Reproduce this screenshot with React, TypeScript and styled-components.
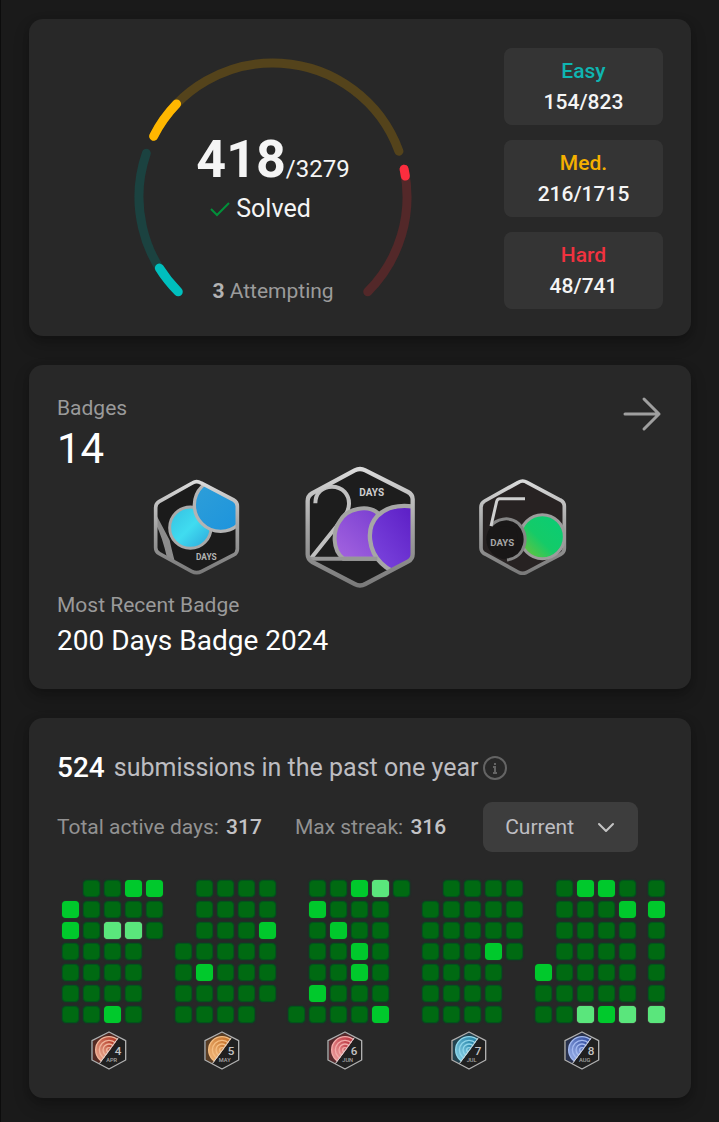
import React from 'react';
import styled, { createGlobalStyle } from 'styled-components';

const GlobalStyle = createGlobalStyle`
  *, *::before, *::after { box-sizing: border-box; }
  body {
    margin: 0;
    background: #1a1a1a;
    color: #f5f5f5;
    font-family: Roboto, "Liberation Sans", sans-serif;
  }
`;

const Page = styled.main`
  display: flex;
  flex-direction: column;
  gap: 29px;
  padding: 19px 28px 24px;
  border-left: 1px solid #0c0c0c;
`;

const Card = styled.section`
  border-radius: 14px;
  background: #282828;
  padding: 28px;
  box-shadow: 0 2px 6px rgba(0, 0, 0, 0.12), 0 8px 16px rgba(0, 0, 0, 0.22);
`;

/* ---------- Solved problems ---------- */

const ProgressCard = styled(Card)`
  display: flex;
  justify-content: space-between;
  gap: 28px;
  padding-top: 29px;
  padding-bottom: 27px;
`;

const Gauge = styled.div`
  flex: 1;
  display: grid;
  justify-items: center;
  align-items: start;
  padding: 9px 0 0 13px;
`;

const GaugeRing = styled.svg`
  grid-area: 1 / 1;
  width: 280px;
  height: 244px;
`;

const GaugeText = styled.div`
  grid-area: 1 / 1;
  display: flex;
  flex-direction: column;
  align-items: center;
  padding-top: 71px;
`;

const SolvedCount = styled.div`
  display: flex;
  align-items: baseline;
  font-size: 24px;
  line-height: 32px;
`;

const SolvedNumber = styled.strong`
  font-size: 52px;
  font-weight: 700;
  line-height: 64px;
`;

const SolvedLabel = styled.div`
  display: flex;
  align-items: center;
  gap: 5px;
  padding-right: 26px;
  font-size: 25px;
  line-height: 34px;
`;

const Attempting = styled.div`
  margin-top: 51px;
  color: #9b9b9b;
  font-size: 21px;
  line-height: 28px;

  strong { font-weight: 700; color: #b3b3b3; }
`;

const Levels = styled.ul`
  display: flex;
  flex-direction: column;
  gap: 15px;
  width: 159px;
  margin: 0;
  padding: 0;
  list-style: none;
`;

const Level = styled.li`
  height: 77px;
  padding-top: 8px;
  border-radius: 8px;
  background: #343434;
  text-align: center;
  font-size: 21px;
  font-weight: 500;
  line-height: 31px;
`;

const LevelName = styled.div<{ $color: string }>`
  color: ${(p) => p.$color};
`;

/* ---------- Badges ---------- */

const BadgesCard = styled(Card)`
  padding-top: 29px;
  padding-bottom: 26px;
`;

const BadgesHead = styled.div`
  display: flex;
  justify-content: space-between;
`;

const Muted = styled.div`
  color: #9a9a9a;
  font-size: 21px;
  line-height: 28px;
`;

const BadgeTotal = styled.div`
  color: #fff;
  font-size: 42px;
  line-height: 54px;
`;

const ArrowButton = styled.button`
  display: flex;
  align-self: flex-start;
  padding: 0;
  border: 0;
  background: none;
  color: #9f9f9f;
  cursor: pointer;
`;

const MedalRow = styled.div`
  display: flex;
  justify-content: center;
  align-items: center;
  gap: 64px;
  margin: -10px 0 3px;
`;

const RecentName = styled.div`
  color: #fff;
  font-size: 28px;
  line-height: 44px;
`;

/* ---------- Submissions ---------- */

const Summary = styled.div`
  display: flex;
  align-items: center;
  color: #bdbdc1;
  font-size: 25px;
  line-height: 44px;
`;

const SummaryCount = styled.span`
  margin-right: 9px;
  color: #fff;
  font-size: 28px;
  font-weight: 500;
`;

const InfoButton = styled.button`
  display: flex;
  margin-left: 5px;
  padding: 0;
  border: 0;
  background: none;
  color: #646464;
`;

const Filters = styled.div`
  display: flex;
  align-items: center;
  gap: 33px;
  margin-top: 12px;
  color: #929292;
  font-size: 21px;

  strong {
    margin-left: 2px;
    font-weight: 500;
    color: #c3c3c6;
  }
`;

const SelectBox = styled.div`
  display: grid;
  align-items: center;
  width: 155px;
  margin-left: 4px;

  svg {
    grid-area: 1 / 1;
    justify-self: end;
    margin-right: 22px;
    pointer-events: none;
  }
`;

const Select = styled.select`
  grid-area: 1 / 1;
  height: 50px;
  padding: 0 40px 0 22px;
  border: 0;
  border-radius: 9px;
  background: #3d3d3d;
  color: #bebec2;
  font: inherit;
  appearance: none;
`;

const Calendar = styled.div`
  display: flex;
  gap: 12px;
  margin: 28px -6px 0 5px;
`;

const Month = styled.div`
  display: flex;
  flex-direction: column;
  align-items: center;
  gap: 8px;
`;

const Days = styled.div`
  display: grid;
  grid-template-rows: repeat(7, 17px);
  grid-auto-flow: column;
  grid-auto-columns: 17px;
  gap: 4px;
`;

const dayStyles: Record<string, string> = {
  D: 'background: #006a12; border: 1px solid #02551b; box-shadow: 0 0 2px #004a24;',
  B: 'background: #00c92c; box-shadow: 0 0 1px #00802a;',
  L: 'background: #5ae67c; box-shadow: 0 0 1px #9fe0a4;',
  '.': '',
};

const Day = styled.span<{ $level: string }>`
  border-radius: 4px;
  ${(p) => dayStyles[p.$level]}
`;

const MonthMedal = styled.svg`
  width: 36px;
  height: 39px;
  margin-right: 8px;
`;

/* ---------- Drawings ---------- */

const CX = 140;
const CY = 140;
const R = 134;

const point = (t: number) => {
  const a = ((135 + t) * Math.PI) / 180;
  return `${(CX + R * Math.cos(a)).toFixed(2)} ${(CY + R * Math.sin(a)).toFixed(2)}`;
};

const arc = (from: number, to: number) => `M${point(from)}A${R} ${R} 0 0 1 ${point(to)}`;

const arcs = [
  { from: 0, done: 13, to: 64, track: '#1b4240', color: '#00bfbd' },
  { from: 72, done: 89, to: 205, track: '#54431b', color: '#ffb700' },
  { from: 213, done: 216, to: 270, track: '#532829', color: '#fb2d3e' },
];

const Ring = () => (
  <GaugeRing viewBox="0 0 280 244" fill="none" strokeWidth="9" strokeLinecap="round" aria-hidden="true">
    {arcs.map((a) => (
      <g key={a.color}>
        <path d={arc(a.from, a.to)} stroke={a.track} />
        <path d={arc(a.from, a.done)} stroke={a.color} />
      </g>
    ))}
  </GaugeRing>
);

const medalFont = { fontFamily: 'Roboto, sans-serif', fontWeight: 500 };
const narrowFont = { fontFamily: '"Liberation Sans Narrow", Roboto, sans-serif', fontWeight: 700 };

const HEX100 =
  'M160 68Q173 60 186 68L284 119Q295 125 295 138V266Q295 278 284 284L188 333Q173 341 158 333L61 280Q50 274 50 262V142Q50 130 60 124Z';

const Medal100 = () => (
  <svg width="88" height="96" viewBox="42 56 264 288" role="img" aria-label="100 Days Badge">
    <defs>
      <linearGradient id="steel" x1="0" y1="0" x2="0" y2="1">
        <stop offset="0" stopColor="#dadada" />
        <stop offset="0.5" stopColor="#a3a3a3" />
        <stop offset="1" stopColor="#7a7a7a" />
      </linearGradient>
      <linearGradient id="cyan" x1="0" y1="0" x2="1" y2="1">
        <stop offset="0" stopColor="#35bfe0" />
        <stop offset="0.5" stopColor="#40dcf0" />
        <stop offset="1" stopColor="#2ba3da" />
      </linearGradient>
      <linearGradient id="azure" x1="0" y1="0" x2="1" y2="1">
        <stop offset="0" stopColor="#2f9fd8" />
        <stop offset="1" stopColor="#1b93dd" />
      </linearGradient>
      <clipPath id="hex100"><path d={HEX100} /></clipPath>
    </defs>
    <path d={HEX100} fill="#1b1b1b" />
    <g clipPath="url(#hex100)">
      <path d="M50 160L92 240Q98 268 108 306L84 292Q70 230 50 190Z" fill="#8c8c8c" />
      <circle cx="154" cy="202" r="62" fill="url(#cyan)" stroke="#a9a9a9" strokeWidth="9" />
      <circle cx="245" cy="134" r="79" fill="url(#azure)" stroke="#b4b4b4" strokeWidth="10" />
    </g>
    <path d={HEX100} fill="none" stroke="url(#steel)" strokeWidth="11" />
    <text x="171" y="300" fontSize="25" fill="#b4b4b4" {...narrowFont}>DAYS</text>
  </svg>
);

const HEX200 =
  'M194 45Q210 37 226 45L354 110Q368 118 368 132V296Q368 311 355 318L226 386Q210 395 194 386L67 320Q53 312 53 297V137Q53 122 66 114Z';

const Medal200 = () => (
  <svg width="110" height="122" viewBox="45 32 330 366" role="img" aria-label="200 Days Badge">
    <defs>
      <linearGradient id="violet" x1="1" y1="0" x2="0" y2="1">
        <stop offset="0" stopColor="#7439cf" />
        <stop offset="1" stopColor="#a565e0" />
      </linearGradient>
      <linearGradient id="purple" x1="1" y1="0" x2="0" y2="1">
        <stop offset="0" stopColor="#5a1cc4" />
        <stop offset="1" stopColor="#7e48df" />
      </linearGradient>
      <clipPath id="hex200"><path d={HEX200} /></clipPath>
    </defs>
    <path d={HEX200} fill="#1d1d1d" />
    <g clipPath="url(#hex200)" fill="none">
      <path d="M76 144C76 112 98 94 126 94C158 94 178 118 177 146C176 166 168 178 150 200L62 310" stroke="#c0c0c0" strokeWidth="12" />
      <path d="M160 310C126 284 128 226 150 196C172 158 232 148 262 172L300 310Z" fill="url(#violet)" stroke="#a4a4a4" strokeWidth="12" />
      <path d="M372 154C330 148 288 156 262 182C226 220 236 286 274 324Q288 338 305 342L378 312Z" fill="url(#purple)" />
      <path d="M372 154C330 148 288 156 262 182C226 220 236 286 274 324Q288 338 305 346" stroke="#a6a6a6" strokeWidth="13" />
      <path d="M58 310H262" stroke="#979797" strokeWidth="12" />
    </g>
    <path d={HEX200} fill="none" stroke="url(#steel)" strokeWidth="13" />
    <text x="208" y="121" fontSize="30" fill="#cfcfcf" {...narrowFont}>DAYS</text>
  </svg>
);

const HEX50 =
  'M160 51Q173 43 186 51L286 104Q298 110 298 123V249Q298 261 287 267L187 320Q173 328 159 320L60 266Q48 260 48 247V126Q48 113 59 107Z';

const Medal50 = () => (
  <svg width="88" height="96" viewBox="42 41 264 288" role="img" aria-label="50 Days Badge">
    <defs>
      <linearGradient id="green" x1="0" y1="1" x2="1" y2="0">
        <stop offset="0.1" stopColor="#66c23f" />
        <stop offset="0.45" stopColor="#14cb68" />
        <stop offset="1" stopColor="#08cc76" />
      </linearGradient>
      <clipPath id="hex50"><path d={HEX50} /></clipPath>
    </defs>
    <path d={HEX50} fill="#272222" />
    <path d={HEX50} fill="none" stroke="url(#steel)" strokeWidth="11" />
    <g clipPath="url(#hex50)">
      <circle cx="124" cy="222" r="60" fill="#191717" />
    </g>
    <circle cx="232" cy="214" r="66" fill="url(#green)" stroke="#9c9c9c" strokeWidth="9" />
    <path d="M78 182C92 162 132 150 160 174C196 208 184 276 126 284C150 262 168 220 150 186Z" fill="#191717" />
    <path d="M78 182C92 162 132 150 160 174C196 208 184 276 126 284" fill="none" stroke="#858585" strokeWidth="9" />
    <path d="M180 100H104Q97 100 95 108L78 182" fill="none" stroke="#cfcfcf" strokeWidth="9" />
    <text x="76" y="243" fontSize="29" fill="#a6a6a6" {...narrowFont}>DAYS</text>
  </svg>
);

type MonthData = {
  name: string;
  label: string;
  number: number;
  tone?: [string, string];
  weeks: string[];
};

const SmallMedal = ({ m }: { m: MonthData }) => {
  const [light, dark] = m.tone!;
  const hex = 'M54 3L104 29V87L54 114L3 87V29Z';
  return (
    <MonthMedal viewBox="0 0 108 117" role="img" aria-label={`${m.name} badge`}>
      <defs>
        <clipPath id={`half-${m.label}`}><path d="M54 5L84 20L26 98L5 86V30Z" /></clipPath>
        <linearGradient id={`tone-${m.label}`} x1="1" y1="0" x2="0" y2="1">
          <stop offset="0.2" stopColor={dark} />
          <stop offset="1" stopColor={light} />
        </linearGradient>
      </defs>
      <path d={hex} fill="#202020" />
      <g clipPath={`url(#half-${m.label})`} fill={`url(#tone-${m.label})`} stroke={light} strokeWidth="4">
        <rect width="108" height="117" fill={dark} stroke="none" opacity="0.35" />
        <circle cx="54" cy="57" r="40" />
        <circle cx="54" cy="57" r="29" />
        <circle cx="54" cy="57" r="18" />
        <circle cx="54" cy="57" r="7" />
      </g>
      <path d="M82 20L25 98" stroke="#d8d8d8" strokeWidth="3" />
      <path d={hex} fill="none" stroke="#b0b0b0" strokeWidth="4" strokeLinejoin="round" />
      <text x="81" y="72" fontSize="35" fill="#c4c4c4" textAnchor="middle" {...medalFont}>{m.number}</text>
      <text x="62" y="94" fontSize="17" fill="#a8a8a8" textAnchor="middle" {...medalFont}>{m.label}</text>
    </MonthMedal>
  );
};

/* Each string is one week, Sunday to Saturday. */
const months: MonthData[] = [
  { name: 'April', label: 'APR', number: 4, tone: ['#f0b49a', '#b5402c'], weeks: ['.BBDDDD', 'DDDDDDD', 'DDLDDDB', 'BDLDDDD', 'BDD....'] },
  { name: 'May', label: 'MAY', number: 5, tone: ['#f5bd80', '#c97832'], weeks: ['...DDDD', 'DDDDBDD', 'DDDDDDD', 'DDDDDDD', 'DDBDDD.'] },
  { name: 'June', label: 'JUN', number: 6, tone: ['#f3aaa8', '#bf3e48'], weeks: ['......D', 'DBDDDBD', 'DDBDDDD', 'BDDBBDD', 'LDDDDDB', 'D......'] },
  { name: 'July', label: 'JUL', number: 7, tone: ['#8fd6ea', '#2b87ab'], weeks: ['.DDDDDD', 'DDDDDDD', 'DDDDDDD', 'DDDBDDD', 'DDDD...'] },
  { name: 'August', label: 'AUG', number: 8, tone: ['#a3b9f0', '#3b56a6'], weeks: ['....BDD', 'DDDDDDD', 'BDDDDDL', 'BDDDDDB', 'DBDDDDL'] },
  { name: 'September', label: 'SEP', number: 9, weeks: ['DBDDDDL'] },
];

const levels = [
  { name: 'Easy', color: '#0fb5b1', value: '154/823' },
  { name: 'Med.', color: '#f5b000', value: '216/1715' },
  { name: 'Hard', color: '#f0323f', value: '48/741' },
];

export default function App() {
  return (
    <>
      <GlobalStyle />
      <Page>
        <ProgressCard>
          <Gauge>
            <Ring />
            <GaugeText>
              <SolvedCount>
                <SolvedNumber>418</SolvedNumber>/3279
              </SolvedCount>
              <SolvedLabel>
                <svg width="22" height="20" viewBox="0 0 22 20" fill="none" stroke="#02903a" strokeWidth="2" aria-hidden="true">
                  <path d="M2 10L8 16L20 4" />
                </svg>
                Solved
              </SolvedLabel>
              <Attempting>
                <strong>3</strong> Attempting
              </Attempting>
            </GaugeText>
          </Gauge>
          <Levels>
            {levels.map((l) => (
              <Level key={l.name}>
                <LevelName $color={l.color}>{l.name}</LevelName>
                {l.value}
              </Level>
            ))}
          </Levels>
        </ProgressCard>

        <BadgesCard>
          <BadgesHead>
            <div>
              <Muted>Badges</Muted>
              <BadgeTotal>14</BadgeTotal>
            </div>
            <ArrowButton type="button" aria-label="View all badges">
              <svg width="42" height="42" viewBox="0 0 42 42" fill="none" stroke="currentColor" strokeWidth="3" strokeLinecap="round" strokeLinejoin="round">
                <path d="M4 20H38M23 5L38 20L23 35" />
              </svg>
            </ArrowButton>
          </BadgesHead>
          <MedalRow>
            <Medal100 />
            <Medal200 />
            <Medal50 />
          </MedalRow>
          <Muted>Most Recent Badge</Muted>
          <RecentName>200 Days Badge 2024</RecentName>
        </BadgesCard>

        <Card>
          <Summary>
            <SummaryCount>524</SummaryCount>
            submissions in the past one year
            <InfoButton type="button" aria-label="About submissions">
              <svg width="24" height="24" viewBox="0 0 24 24" fill="none" stroke="currentColor" strokeWidth="2">
                <circle cx="12" cy="12" r="11" />
                <path d="M12 7V9M10 11H12V17M10 17H14" />
              </svg>
            </InfoButton>
          </Summary>
          <Filters>
            <span>Total active days: <strong>317</strong></span>
            <span>Max streak: <strong>316</strong></span>
            <SelectBox>
              <Select aria-label="Period" defaultValue="Current">
                <option>Current</option>
                <option>2024</option>
                <option>2023</option>
              </Select>
              <svg width="20" height="20" viewBox="0 0 20 20" fill="none" stroke="#c4c4c4" strokeWidth="2" strokeLinecap="round" strokeLinejoin="round" aria-hidden="true">
                <path d="M3 7L10 14L17 7" />
              </svg>
            </SelectBox>
          </Filters>
          <Calendar>
            {months.map((m) => (
              <Month key={m.name}>
                <Days>
                  {m.weeks.join('').split('').map((level, i) => (
                    <Day key={i} $level={level} />
                  ))}
                </Days>
                {m.tone && <SmallMedal m={m} />}
              </Month>
            ))}
          </Calendar>
        </Card>
      </Page>
    </>
  );
}
